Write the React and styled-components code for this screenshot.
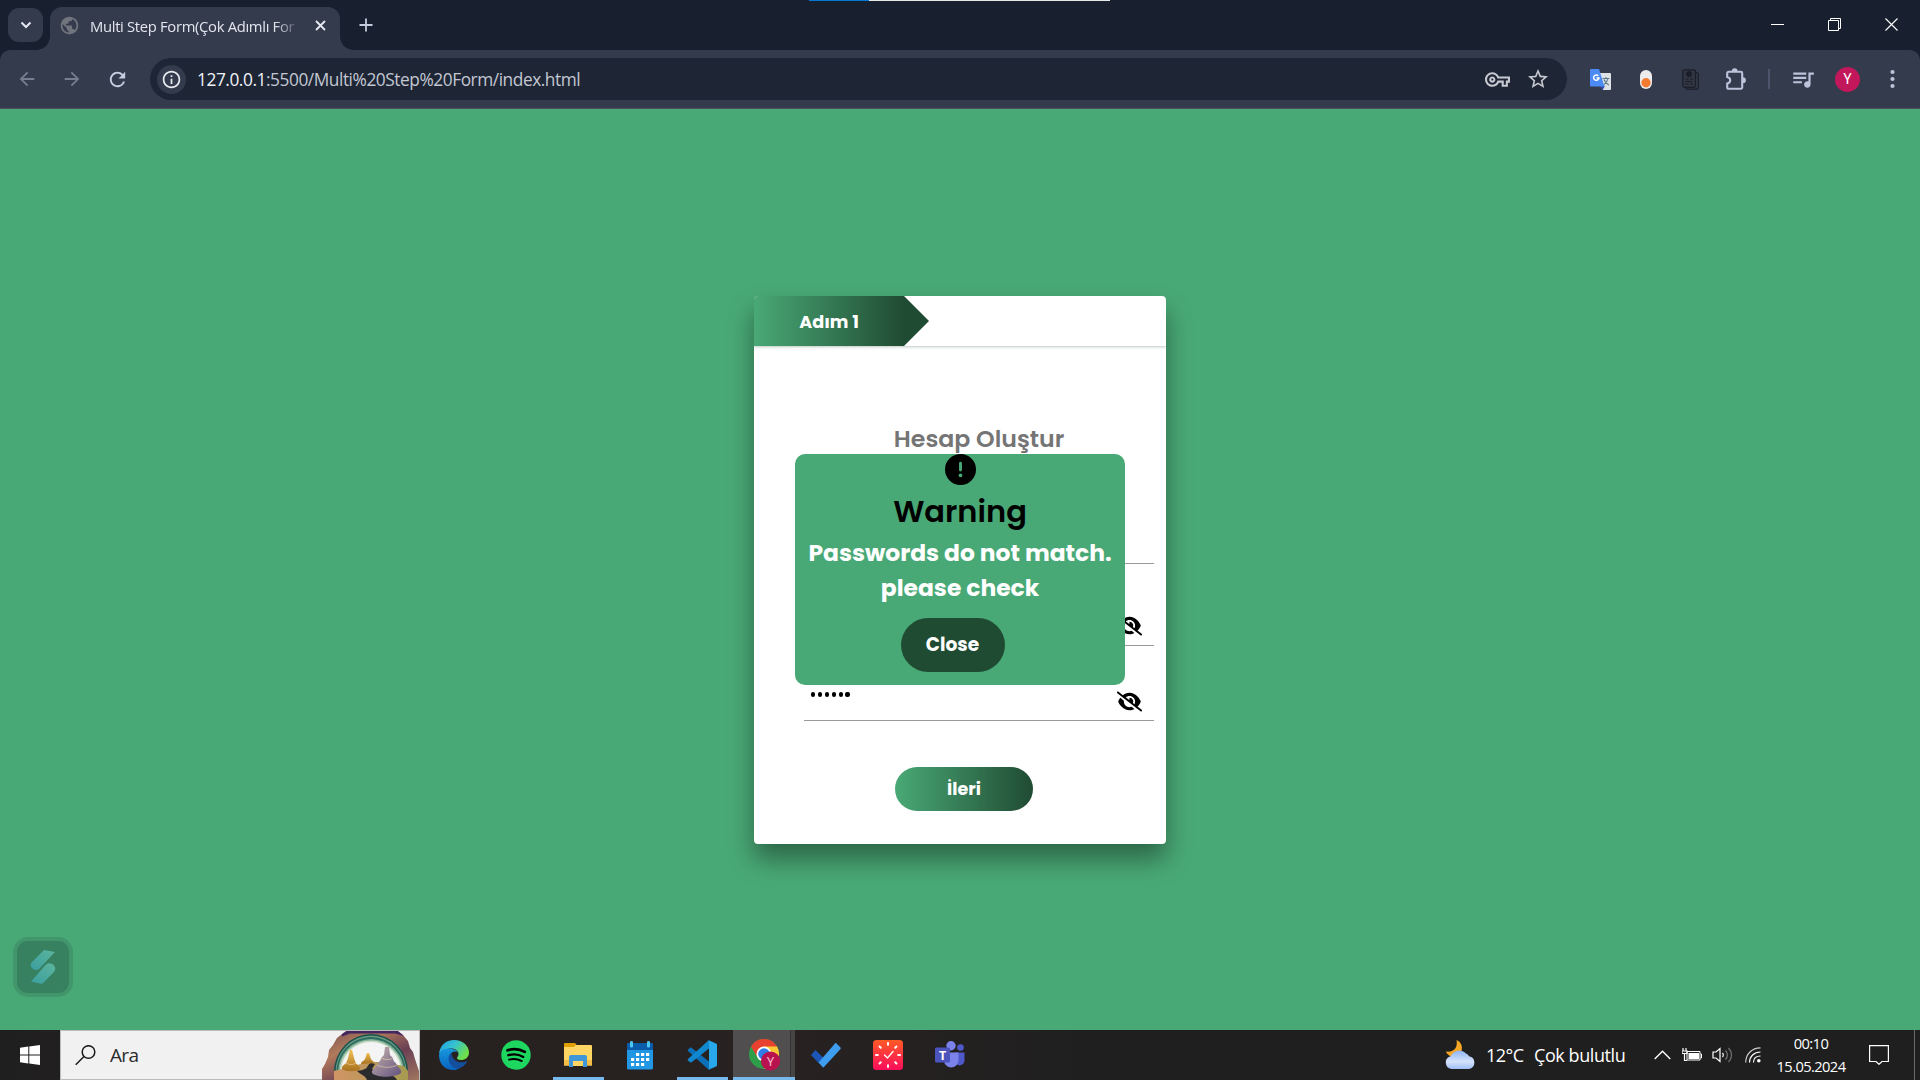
import React from 'react';
import styled, { createGlobalStyle } from 'styled-components';
import { MdOutlineVpnKey, MdStarOutline, MdQueueMusic, MdArrowBack, MdArrowForward, MdRefresh, MdInfoOutline, MdPublic } from 'react-icons/md';
import { FaEyeSlash, FaCircleExclamation } from 'react-icons/fa6';

const Global = createGlobalStyle`
  * { box-sizing: border-box; }
  html, body, #root { margin: 0; height: 100%; }
  body { overflow: hidden; font-family: "Segoe UI", "Open Sans", "Noto Sans", sans-serif; }
  svg { display: block; flex: none; }
`;

const poppins = 'Poppins, Inter, "Noto Sans", sans-serif';

const Screen = styled.div`
  width: 1920px;
  height: 1080px;
  display: flex;
  flex-direction: column;
  background: #49a976;
`;

/* ---------- browser chrome ---------- */
const TitleBar = styled.header`
  position: relative;
  height: 50px;
  flex: none;
  display: flex;
  background: #18202f;
  padding-left: 8px;
`;
const LoadingStrip = styled.div`
  position: absolute;
  left: 809px;
  top: 0;
  width: 301px;
  height: 1px;
  background: linear-gradient(90deg, #0078d4 60px, #e4e8e6 60px);
`;
const TabSearch = styled.button`
  width: 35px;
  height: 34px;
  margin: 8px 7px 0 0;
  padding: 0;
  border: 0;
  border-radius: 11px;
  background: #343b4c;
  display: grid;
  place-items: center;
`;
const Tab = styled.div`
  position: relative;
  width: 290px;
  height: 43px;
  margin-top: 7px;
  padding: 0 14px 6px 9px;
  display: flex;
  align-items: center;
  border-radius: 12px 12px 0 0;
  background: #343b4c;
  &::before, &::after {
    content: "";
    position: absolute;
    bottom: 0;
    width: 13px;
    height: 13px;
  }
  &::before { left: -13px; background: radial-gradient(circle at 0 0, transparent 12.5px, #343b4c 13px); }
  &::after { right: -13px; background: radial-gradient(circle at 100% 0, transparent 12.5px, #343b4c 13px); }
`;
const TabTitle = styled.span`
  width: 214px;
  margin: 0 11px 0 10px;
  white-space: nowrap;
  font-size: 14.8px;
  line-height: 22px;
  letter-spacing: -0.32px;
  color: #e3e6ee;
  mask-image: linear-gradient(90deg, #000 184px, transparent 211px);
`;
const NewTab = styled.div`
  margin: 18px 0 0 19px;
`;
const WindowButtons = styled.div`
  margin: 18px 22px 0 auto;
  display: flex;
  gap: 44px;
`;
const ToolbarShell = styled.div`
  background: #18202f;
  flex: none;
`;
const Toolbar = styled.div`
  height: 59px;
  display: flex;
  align-items: center;
  background: #343b4c;
  border-bottom: 1px solid #4c5260;
  border-radius: 10px 10px 0 0;
`;
const Nav = styled.div`
  display: flex;
  width: 150px;
  padding-left: 16px;
  gap: 23px;
  color: #767d8f;
`;
const UrlBar = styled.div`
  width: 1417px;
  height: 42px;
  border-radius: 21px;
  background: #1e2636;
  display: flex;
  align-items: center;
  padding: 0 17px 0 7px;
  color: #c7c9d1;
`;
const InfoDot = styled.span`
  width: 29px;
  height: 29px;
  margin-right: 11px;
  border-radius: 50%;
  background: #343b4c;
  color: #e8eaf0;
  display: grid;
  place-items: center;
`;
const Url = styled.span`
  flex: 1;
  padding-top: 1px;
  font-size: 17.3px;
  line-height: 24px;
  letter-spacing: -0.44px;
  color: #c3c7d1;
  b { font-weight: 400; color: #f0f2f7; }
`;
const UrlActions = styled.div`
  display: flex;
  align-items: center;
  gap: 16px;
`;
const Extensions = styled.div`
  display: flex;
  align-items: center;
  margin-left: 23px;
  color: #bcc4dc;
`;
const Slot = styled.div`
  width: ${p => p.$w}px;
  margin-right: ${p => p.$gap || 0}px;
  display: flex;
  justify-content: center;
`;
const Divider = styled.div`
  width: 2px;
  height: 20px;
  margin-right: 22px;
  background: #4c556b;
`;
const Avatar = styled.div`
  width: 25px;
  height: 25px;
  margin-right: 30px;
  border-radius: 50%;
  background: #c2185b;
  color: #fff;
  font: 400 14px/25px Roboto, sans-serif;
  text-align: center;
`;

/* ---------- page ---------- */
const Page = styled.main`
  height: 921px;
  flex: none;
  padding-top: 187px;
  position: relative;
  background: #49a976;
`;
const Card = styled.section`
  position: relative;
  width: 412px;
  height: 548px;
  margin: 0 auto;
  border-radius: 4px;
  background: #fff;
  box-shadow: 0 15px 26px rgba(0, 0, 0, 0.4);
  font-family: ${poppins};
  display: flex;
  flex-direction: column;
`;
const StepHeader = styled.div`
  height: 50px;
  flex: none;
  display: flex;
  border-radius: 4px 4px 0 0;
  box-shadow: 0 1px 3px rgba(33, 76, 52, 0.3);
  clip-path: inset(0 0 -5px 0);
`;
const StepFlag = styled.div`
  width: 175px;
  height: 50px;
  padding: 1px 25px 0 0;
  border-top-left-radius: 4px;
  clip-path: polygon(0 0, 150px 0, 175px 25px, 150px 50px, 0 50px);
  background: linear-gradient(90deg, #49a976, #204b33 150px);
  color: #fff;
  font-size: 17.6px;
  font-weight: 700;
  line-height: 51px;
  text-align: center;
`;
const Form = styled.form`
  display: flex;
  flex-direction: column;
  padding: 75px 12px 0 50px;
`;
const Heading = styled.h2`
  margin: 0 0 1px;
  height: 36px;
  font-size: 23.7px;
  line-height: 36px;
  font-weight: 600;
  text-align: center;
  color: #757575;
`;
const Field = styled.label`
  display: flex;
  align-items: flex-end;
  justify-content: space-between;
  height: ${p => p.$h}px;
  padding: 0 12px ${p => p.$pad || 6}px 8px;
  border-bottom: 1px solid #999;
  color: #000;
`;
const Dots = styled.span`
  display: flex;
  gap: 2.7px;
  margin: 0 0 17.5px -1px;
  i { width: 4.2px; height: 4.2px; border-radius: 50%; background: #000; }
`;
const NextButton = styled.button`
  width: 138px;
  height: 44px;
  margin: 46px 0 0 91px;
  padding: 0;
  border: 0;
  border-radius: 22px;
  background: linear-gradient(90deg, #49a976, #204b33);
  color: #fff;
  font: 700 17.5px/44px ${poppins};
`;
const Modal = styled.div`
  position: absolute;
  left: 41px;
  top: 158px;
  width: 330px;
  height: 231px;
  border-radius: 10px;
  background: #49a976;
  display: flex;
  flex-direction: column;
  align-items: center;
`;
const Warning = styled.h1`
  margin: 4px 0 0;
  font-size: 30.5px;
  line-height: 46px;
  font-weight: 600;
  color: #000;
`;
const Message = styled.p`
  margin: 0;
  font-size: 23.4px;
  line-height: 35px;
  font-weight: 700;
  color: #fff;
  text-align: center;
  white-space: nowrap;
`;
const CloseButton = styled.button`
  width: 104px;
  height: 54px;
  margin: 13px 15px 0 0;
  padding: 0;
  border: 0;
  border-radius: 27px;
  background: #204b33;
  color: #fff;
  font: 700 18.6px/54px ${poppins};
`;
const Widget = styled.div`
  position: absolute;
  left: 13px;
  bottom: 33px;
  width: 60px;
  height: 60px;
  border: 4px solid #42966b;
  border-radius: 15px;
  background: #378060;
  display: grid;
  place-items: center;
`;

/* ---------- taskbar ---------- */
const Taskbar = styled.footer`
  height: 50px;
  flex: none;
  display: flex;
  background: linear-gradient(90deg, #201f1f 0, #272120 440px, #272221 800px, #1f1f1f 1100px);
  color: #fff;
`;
const Start = styled.div`
  width: 60px;
  display: grid;
  place-items: center;
`;
const Search = styled.div`
  width: 360px;
  height: 50px;
  padding-left: 14px;
  border: 1px solid #bcbcbc;
  background: #f1f1f1;
  display: flex;
  align-items: center;
  font-size: 19px;
  color: #2b2b2b;
`;
const SearchText = styled.span`
  flex: 1;
  margin-left: 14px;
  letter-spacing: -0.7px;
`;
const Apps = styled.div`
  display: flex;
  padding-left: 3px;
`;
const AppButton = styled.div`
  width: 62px;
  display: flex;
  flex-direction: column;
  align-items: center;
  justify-content: center;
`;
const OpenApp = styled(AppButton)`
  background: linear-gradient(#76b9ed, #76b9ed) center bottom / ${p => (p.$active ? 62 : 51)}px 3px no-repeat,
    ${p => (p.$active ? 'linear-gradient(90deg, #504e4e 57px, #333 57px, #333 58px, #464444 58px)' : 'none')};
`;
const Tray = styled.div`
  margin-left: auto;
  display: flex;
  align-items: center;
`;
const Weather = styled.div`
  display: flex;
  align-items: center;
  width: 209px;
  font-size: 18px;
  white-space: nowrap;
  letter-spacing: -0.42px;
`;
const Temp = styled.span`
  width: 48px;
  margin-left: 11px;
  letter-spacing: -0.5px;
`;
const Clock = styled.div`
  width: 80px;
  margin-right: 18px;
  font-size: 14.7px;
  line-height: 23px;
  letter-spacing: -0.6px;
  text-align: center;
`;
const DesktopEdge = styled.div`
  width: 6px;
  height: 50px;
  border-left: 1px solid #6a6a6a;
`;

const Svg = ({ w, h, children, ...rest }) => (
  <svg width={w} height={h} viewBox={`0 0 ${w} ${h}`} fill="none" {...rest}>{children}</svg>
);

const TranslateIcon = () => (
  <Svg w={21} h={21}>
    <path d="M8 4h12a1 1 0 0 1 1 1v15a1 1 0 0 1-1 1h-7z" fill="#dfe1e5" />
    <path d="M12.500 9.500h7M16 8v1.500M18 9.500c-.6 3-2.500 5-4.500 6.500M14 10.500c.8 2.200 2.500 4 4.800 5.500" stroke="#607d8b" strokeWidth="1.200" />
    <path d="M10 17h5l-2.500 4z" fill="#3949ab" />
    <path d="M1 0h8l5.500 17.500H1a1 1 0 0 1-1-1V1a1 1 0 0 1 1-1z" fill="#4c8bf5" />
    <path d="M8.300 6.800A2.700 2.700 0 1 0 9 9H6.500" stroke="#fff" strokeWidth="1.500" />
  </Svg>
);
const DocsIcon = () => (
  <Svg w={17} h={21} stroke="#1b1e27" strokeWidth="1.200">
    <path d="M13.500 3.500h1a1.700 1.700 0 0 1 1.700 1.700v13a2 2 0 0 1-2 2H5.500a1.700 1.700 0 0 1-1.700-1.700" />
    <rect x="0.800" y="0.800" width="12.700" height="17.500" rx="1.700" fill="#303644" />
    <circle cx="7" cy="5" r="2.300" fill="#1b1e27" />
    <path d="M3.500 10h3M8 10h3M3.500 12.500h7M3.500 15h3M8 15h3" />
  </Svg>
);
const Puzzle = () => (
  <Svg w={22} h={22}>
    <path d="M2.200 5.200a1.400 1.400 0 0 1 1.400-1.400h12.200a1.400 1.400 0 0 1 1.400 1.400v14.200a1.400 1.400 0 0 1-1.400 1.400H3.600a1.400 1.400 0 0 1-1.400-1.400v-3.800c1.900-.5 3-1.700 3-3.300s-1.100-2.800-3-3.300z" stroke="currentColor" strokeWidth="2.100" />
    <path d="M6.800 3.200a2.900 2.900 0 0 1 5.800 0zM18 9.300a2.900 2.900 0 0 1 0 5.800z" fill="currentColor" />
  </Svg>
);
const rings = [[37, 38, '#17504d'], [35.5, 36.5, '#68997f'], [34.5, 35, '#2c6b60'], [33, 33, '#7fae94'], [31.5, 31.5, '#c3d8c0'], [30, 30, '#f4f4f4']];
const Bing = () => (
  <Svg w={97} h={49}>
    <defs>
      <linearGradient id="arch" x1="0" y1="0" x2="1" y2="1">
        <stop offset="0" stopColor="#6d4b54" /><stop offset=".3" stopColor="#b27a5b" />
        <stop offset=".62" stopColor="#6b4054" /><stop offset="1" stopColor="#a0765f" />
      </linearGradient>
      <linearGradient id="sand" x1="0" x2="1"><stop stopColor="#d09565" /><stop offset="1" stopColor="#a69a50" /></linearGradient>
      <linearGradient id="gold" x1="0" y1="0" x2="0" y2="1"><stop stopColor="#f0bd52" /><stop offset="1" stopColor="#a8711f" /></linearGradient>
      <linearGradient id="mauve" x1="0" y1="0" x2="1" y2="1"><stop stopColor="#c9b5ad" /><stop offset="1" stopColor="#62527f" /></linearGradient>
    </defs>
    <path d="M0 49V38l3-5 3-7 1-7 4-5 4-7 5-4 4-3h51l6 4 5 6 2 7 3 4 2 7 2 6 2 6v9z" fill="url(#arch)" />
    <path d="M20 3 25 0h51l6 5-9-2.500H28l-8 3z" fill="#43265f" />
    {rings.map(([rx, ry, fill]) => <ellipse key={rx} cx="49" cy="41" rx={rx} ry={ry} fill={fill} />)}
    <path d="M12 49v-9l16-4 18-5h14l22 4 4 5v9z" fill="url(#sand)" />
    <path d="M35 40c14-2 8-5 14-8l4 1-3 5c14 4 23 6 25 11H45c-2-5-6-5-10-9z" fill="#2b2a2d" />
    <path d="M39 33c0-3 3-3 4-5l2-6 2 0 2 6c1 2 3 2 3 4z" fill="url(#gold)" />
    <path d="M20 38c-1-4 4-4 5-8l1-3 2-8h2l2 8 1 3c1 4 5 4 5 8-4 3-14 3-18 0z" fill="url(#gold)" />
    <path d="M50 42c-1-4 4-5 5-8s4-4 4-7l3-3 1-8h4l1 8 3 3c0 4 3 4 4 7s5 4 4 8c-7 5-24 5-29 0z" fill="url(#mauve)" />
    <path d="M55 34c6 3 15 3 20 0M59 27c4 2 9 2 12 0M24 32c4 2 7 2 10 0" stroke="#efd9ab" strokeOpacity=".6" />
  </Svg>
);
const Edge = () => (
  <Svg w={30} h={30}>
    <defs>
      <linearGradient id="e1" x1="0" y1="0" x2="1" y2=".5"><stop stopColor="#1b9de2" /><stop offset=".5" stopColor="#35c1d1" /><stop offset="1" stopColor="#6fe04a" /></linearGradient>
      <linearGradient id="e2" x1="0" y1="0" x2="0" y2="1"><stop stopColor="#1697dd" /><stop offset="1" stopColor="#0a63bd" /></linearGradient>
    </defs>
    <path d="M0 14C1 5 7 0 15 0c9 0 15 6 15 12.500 0 5-4 7.500-8 7.500-3 0-4-1-4-2s1.500-1.500 1.500-4c0-3-3-5.500-7-5.500C7 8.500 2 11 0 14z" fill="url(#e1)" />
    <path d="M0 15c1-4.500 5-6.500 10-6.500 4 0 7 1.500 8.500 3.500-5-2-8 2-8 6.500 0 6 5 10 10 9.500-2 1.500-3.500 2-6 2C6 30 0 24 0 15z" fill="url(#e2)" />
    <path d="M12.500 12.500c-3 2-4 7-1.500 11 2.500 5 8 6 11 4 3-1.500 5-3.800 6-5.500.4-.8-.3-1-1-.6-6 2.600-14.500-.4-14.500-8.900z" fill="#134f9c" />
  </Svg>
);
const Spotify = () => (
  <Svg w={30} h={30}>
    <circle cx="15" cy="15" r="14.700" fill="#1ed760" />
    <g stroke="#000" strokeLinecap="round">
      <path d="M6.500 10.300c6-1.800 12.500-1.200 17.300 1.600" strokeWidth="2.800" />
      <path d="M7.300 15.200c5-1.400 10.700-.9 15 1.700" strokeWidth="2.300" />
      <path d="M8 19.600c4.500-1.200 9-.7 12.800 1.500" strokeWidth="1.900" />
    </g>
  </Svg>
);
const Explorer = () => (
  <Svg w={28} h={24}>
    <path d="M0 1a1 1 0 0 1 1-1h10l2.500 3H13v5H0z" fill="#e19f06" />
    <path d="M0 4h9.500L12 2h15a1 1 0 0 1 1 1v19.500H0z" fill="#ffd564" />
    <path d="M0 17h28v5.500H0z" fill="#f3bd45" />
    <path d="M5 14a2 2 0 0 1 2-2h14a2 2 0 0 1 2 2v10h-4v-6H9v6H5z" fill="#3f97d8" />
    <path d="M9 18h10v5H9z" fill="#ffd564" />
  </Svg>
);
const Calendar = () => (
  <Svg w={26} h={29}>
    <rect y="2" width="26" height="26.500" rx="1.500" fill="#2196e3" />
    <path d="M0 3.500A1.500 1.500 0 0 1 1.500 2h23A1.500 1.500 0 0 1 26 3.500V9H0z" fill="#0a5cab" />
    <rect x="3" width="3" height="6.500" rx="1.300" fill="#4cc5f5" /><rect x="20" width="3" height="6.500" rx="1.300" fill="#4cc5f5" />
    <g fill="#fff">{[[9, 12], [14, 12], [19, 12], [4, 17], [9, 17], [14, 17], [19, 17], [4, 22], [9, 22], [14, 22]].map(([x, y]) => <rect key={x + '-' + y} x={x} y={y} width="3.200" height="3" />)}</g>
  </Svg>
);
const VsCode = () => (
  <Svg w={30} h={30}>
    <path d="M1 9.500 3 7.700c.5-.4 1-.4 1.500 0L22 21.500V30L1 11c-.5-.5-.5-1 0-1.500z" fill="#0b70b8" />
    <path d="M1 20.500l2 1.800c.5.400 1 .4 1.500 0L22 8.500V0L1 19c-.5.500-.5 1 0 1.500z" fill="#1088d0" />
    <path d="M21 0l8 3.500c.7.300 1 .8 1 1.500v20c0 .7-.3 1.200-1 1.500L21 30c.8-.3 1-1 1-2V2c0-1-.2-1.700-1-2z" fill="#28a8ea" />
  </Svg>
);
const Chrome = () => (
  <Svg w={32} h={32}>
    <circle cx="16" cy="15" r="15" fill="#2e9e4a" />
    <path d="M16 15 3 7.500A15 15 0 0 1 29 7.500z" fill="#e8412f" />
    <path d="M16 7.500h13A15 15 0 0 1 16 30l6.500-11z" fill="#fcc934" />
    <path d="M3 7.500 9.500 18.500 16 7.500z" fill="#e8412f" />
    <circle cx="16" cy="15" r="7.500" fill="#fff" /><circle cx="16" cy="15" r="5.800" fill="#2f7de9" />
    <circle cx="22.500" cy="22" r="9.600" fill="#b8124f" />
    <text x="22.500" y="26.500" textAnchor="middle" fontFamily="Roboto, sans-serif" fontSize="12.500" fill="#f3b9cd">Y</text>
  </Svg>
);
const Todo = () => (
  <Svg w={30} h={26}>
    <path d="M0 13l4.500-5 8 8-5 5z" fill="#1b55b8" />
    <path d="M7.500 20.500 24 1.500c.5-.6 1-.6 1.500 0l4 4c.5.500.5 1 0 1.500L13 25c-.5.500-1 .5-1.500 0z" fill="#3f9df0" />
  </Svg>
);
const RedClock = () => (
  <Svg w={30} h={30}>
    <defs><linearGradient id="rc" x1="0" y1="0" x2="0" y2="1"><stop stopColor="#ff5a26" /><stop offset="1" stopColor="#fb0d5c" /></linearGradient></defs>
    <rect width="30" height="30" rx="3.500" fill="url(#rc)" />
    {[0, 45, 90, 135, 180, 225, 270, 315].map(a => <path key={a} d="M15 3v1.800" stroke="#fff" strokeWidth="2" strokeLinecap="round" transform={`rotate(${a} 15 15)`} />)}
    <path d="M11.500 15l3 3 5.500-6.500" stroke="#fff" strokeWidth="1.400" strokeLinecap="round" />
  </Svg>
);
const Teams = () => (
  <Svg w={30} h={28}>
    <circle cx="25.500" cy="6.500" r="3.300" fill="#5059c9" /><path d="M20 11.500h9.500v8a5 5 0 0 1-7 4.500z" fill="#5059c9" />
    <circle cx="16" cy="4.700" r="4.700" fill="#7b83eb" /><path d="M9 11.500h14.500V20a7.300 7.300 0 0 1-14.500 0z" fill="#7b83eb" />
    <rect y="6.500" width="15" height="15" rx="1.500" fill="#4b53bc" />
    <text x="7.500" y="18.500" textAnchor="middle" fontFamily="Open Sans, sans-serif" fontWeight="700" fontSize="12.500" fill="#fff">T</text>
  </Svg>
);
const Moon = () => (
  <Svg w={30} h={30}>
    <defs><linearGradient id="cl" x1="0" y1="0" x2="0" y2="1"><stop stopColor="#8fb4f3" /><stop offset=".6" stopColor="#d5e3fb" /><stop offset="1" stopColor="#9fbef5" /></linearGradient></defs>
    <path d="M11.500 0c8 3 7 15-1.500 16.500-5 .5-8-2-9-5 8 1 12-4 10.500-11.500z" fill="#f5a623" />
    <path d="M6.500 29a6.500 6.500 0 0 1-1-12.700A9.500 9.500 0 0 1 21 13.500a5 5 0 0 1 3 2.700 6.500 6.500 0 0 1 0 12.800z" fill="url(#cl)" />
  </Svg>
);

export default function App() {
  return (
    <Screen>
      <Global />
      <TitleBar>
        <LoadingStrip />
        <TabSearch><Svg w={12} h={8}><path d="M1.500 1.500 6 6l4.500-4.500" stroke="#e6e9f2" strokeWidth="2" /></Svg></TabSearch>
        <Tab>
          <MdPublic size={21} color="#70757d" />
          <TabTitle>Multi Step Form(Çok Adımlı For</TabTitle>
          <Svg w={11} h={11}><path d="M1 1l9 9M10 1l-9 9" stroke="#e6e9f2" strokeWidth="1.800" /></Svg>
        </Tab>
        <NewTab><Svg w={14} h={14}><path d="M7 .5v13M.5 7h13" stroke="#c5cce0" strokeWidth="1.800" /></Svg></NewTab>
        <WindowButtons>
          <Svg w={13} h={13}><path d="M0 6.500h13" stroke="#fff" /></Svg>
          <Svg w={13} h={13}><path d="M.5 2.500h10v10H.5zM2.500 2.500v-2h10v10h-2" stroke="#fff" /></Svg>
          <Svg w={13} h={13}><path d="M.5.5l12 12M12.500.5l-12 12" stroke="#fff" strokeWidth="1.100" /></Svg>
        </WindowButtons>
      </TitleBar>

      <ToolbarShell>
        <Toolbar>
          <Nav>
            <MdArrowBack size={22} /><MdArrowForward size={22} /><MdRefresh size={23} color="#c5cce0" />
          </Nav>
          <UrlBar>
            <InfoDot><MdInfoOutline size={21} /></InfoDot>
            <Url><b>127.0.0.1</b>:5500/Multi%20Step%20Form/index.html</Url>
            <UrlActions><MdOutlineVpnKey size={25} /><MdStarOutline size={24} /></UrlActions>
          </UrlBar>
          <Extensions>
            <Slot $w={21} $gap={28}><TranslateIcon /></Slot>
            <Slot $w={13} $gap={30}><Svg w={12} h={19}><rect width="12" height="19" rx="6" fill="#ececec" /><circle cx="6" cy="12.800" r="4.700" fill="#f47b30" /></Svg></Slot>
            <Slot $w={17} $gap={26}><DocsIcon /></Slot>
            <Slot $w={22} $gap={21}><Puzzle /></Slot>
            <Divider />
            <Slot $w={22} $gap={21}><MdQueueMusic size={26} /></Slot>
            <Avatar>Y</Avatar>
            <Svg w={5} h={20}><g fill="#bcc4dc"><circle cx="2.500" cy="3" r="2.100" /><circle cx="2.500" cy="10" r="2.100" /><circle cx="2.500" cy="17" r="2.100" /></g></Svg>
          </Extensions>
        </Toolbar>
      </ToolbarShell>

      <Page>
        <Card>
          <StepHeader><StepFlag>Adım 1</StepFlag></StepHeader>
          <Form>
            <Heading>Hesap Oluştur</Heading>
            <Field $h={106} />
            <Field $h={82} $pad={7}><span /><FaEyeSlash size={25} /></Field>
            <Field $h={75}><Dots><i /><i /><i /><i /><i /><i /></Dots><FaEyeSlash size={25} /></Field>
            <NextButton type="button">İleri</NextButton>
          </Form>
          <Modal>
            <FaCircleExclamation size={31} />
            <Warning>Warning</Warning>
            <Message>Passwords do not match.<br />please check</Message>
            <CloseButton>Close</CloseButton>
          </Modal>
        </Card>
        <Widget>
          <Svg w={26} h={34}>
            <defs><linearGradient id="wg" x1="1" y1="0" x2="0" y2="1"><stop stopColor="#5bb49c" /><stop offset="1" stopColor="#3b9fa0" /></linearGradient></defs>
            <path d="M14 0l11 2L9.500 18.500C7 21 3 20 1.500 17.500S.5 13 3 11z" fill="url(#wg)" />
            <path d="M12 34L1 31.500 15.500 15c2.500-2.500 6.500-2 8.500.5s1.500 5-.5 7z" fill="url(#wg)" />
          </Svg>
        </Widget>
      </Page>

      <Taskbar>
        <Start><Svg w={20} h={20}><path d="M0 2.800l8.300-1.200v7.900H0zM9.300 1.400 20 0v9.500H9.300zM0 10.500h8.300v7.900L0 17.200zM9.300 10.500H20V20L9.300 18.600z" fill="#fff" /></Svg></Start>
        <Search>
          <Svg w={21} h={21}><circle cx="13.500" cy="7" r="6.300" stroke="#1b1b1b" strokeWidth="1.500" /><path d="M9 11.500.7 19.800" stroke="#1b1b1b" strokeWidth="1.500" /></Svg>
          <SearchText>Ara</SearchText>
          <Bing />
        </Search>
        <Apps>
          <AppButton><Edge /></AppButton>
          <AppButton><Spotify /></AppButton>
          <OpenApp><Explorer /></OpenApp>
          <AppButton><Calendar /></AppButton>
          <OpenApp><VsCode /></OpenApp>
          <OpenApp $active><Chrome /></OpenApp>
          <AppButton><Todo /></AppButton>
          <AppButton><RedClock /></AppButton>
          <AppButton><Teams /></AppButton>
        </Apps>
        <Tray>
          <Weather><Moon /><Temp>12°C</Temp>Çok bulutlu</Weather>
          <Slot $w={17} $gap={11}><Svg w={17} h={10}><path d="M.7 9 8.500 1.200 16.300 9" stroke="#fff" strokeWidth="1.400" /></Svg></Slot>
          <Slot $w={20} $gap={10}><Svg w={20} h={14}><path d="M5 3.500h13v8.500H5zM18.500 6h1v4h-1" stroke="#fff" /><path d="M6.500 5h10.500v6H6.500z" fill="#fff" /><path d="M1 0v3M4 0v3M0 3h5v2.500H0zM2.500 6v6.500H5" stroke="#fff" strokeWidth="1.200" /></Svg></Slot>
          <Slot $w={21} $gap={12}><Svg w={21} h={18}><path d="M1 6h3l4-3.500v13L4 12H1z" stroke="#fff" strokeWidth="1.200" /><path d="M10.500 7c1 1 1 3 0 4" stroke="#fff" strokeWidth="1.200" /><path d="M13.500 4.500c2.500 2.500 2.500 6.500 0 9M16.500 2c4 4 4 10 0 14" stroke="#777" strokeWidth="1.200" /></Svg></Slot>
          <Slot $w={16} $gap={10}><Svg w={16} h={16}><g stroke="#fff" strokeWidth="1.200"><path d="M.7 15.500C.7 7 7 .8 15.500.8" stroke="#ccc" /><path d="M4.500 15.500c0-6 4.500-10.500 11-10.500M8.500 15.500c0-4 2.800-6.500 7-6.500" /></g><circle cx="13.800" cy="13.800" r="1.800" fill="#fff" /></Svg></Slot>
          <Clock>00:10<br />15.05.2024</Clock>
          <Slot $w={20} $gap={25}><Svg w={20} h={20}><path d="M.6.6h18.800v15.900H13L10 19.300 7 16.500H.6z" stroke="#fff" strokeWidth="1.200" /></Svg></Slot>
          <DesktopEdge />
        </Tray>
      </Taskbar>
    </Screen>
  );
}
